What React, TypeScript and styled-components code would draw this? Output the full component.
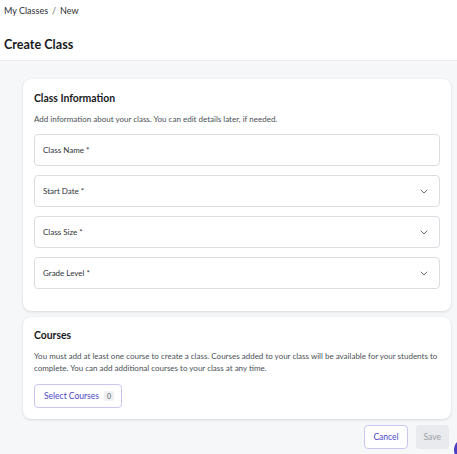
import React from 'react';
import styled, { createGlobalStyle } from 'styled-components';

const GlobalStyle = createGlobalStyle`
  html, body {
    margin: 0;
    padding: 0;
    background: #f6f7f9;
    font-family: Lato, "Open Sans", sans-serif;
    color: #1d1f22;
    overflow: hidden;
  }
`;

const fields = [
  { label: 'Class Name *', select: false },
  { label: 'Start Date *', select: true },
  { label: 'Class Size *', select: true },
  { label: 'Grade Level *', select: true },
];

const Chevron = () => (
  <svg width="8" height="5" viewBox="0 0 8 5" fill="none">
    <path d="M1 1l3 3 3-3" stroke="#6b7078" strokeWidth="1" strokeLinecap="round" strokeLinejoin="round" />
  </svg>
);

export default function App() {
  return (
    <Page>
      <GlobalStyle />
      <Header>
        <Breadcrumb>
          <Crumb>My Classes</Crumb>
          <Sep>/</Sep>
          <Crumb>New</Crumb>
        </Breadcrumb>
        <Title>Create Class</Title>
      </Header>

      <Main>
        <Card $pad="12px 11px 22px">
          <CardTitle>Class Information</CardTitle>
          <CardText>Add information about your class. You can edit details later, if needed.</CardText>
          <Fields>
            {fields.map((f) => (
              <Field key={f.label}>
                <FieldLabel>{f.label}</FieldLabel>
                {f.select && <Chevron />}
              </Field>
            ))}
          </Fields>
        </Card>

        <Card $pad="11px 11px 11px">
          <CardTitle>Courses</CardTitle>
          <CardText>
            You must add at least one course to create a class. Courses added to your class will be available for your students to complete. You can add additional courses to your class at any time.
          </CardText>
          <SelectButton>
            Select Courses
            <Count>0</Count>
          </SelectButton>
        </Card>

        <Actions>
          <OutlineButton>Cancel</OutlineButton>
          <SaveButton disabled>Save</SaveButton>
        </Actions>
      </Main>

      <HelpBubble />
    </Page>
  );
}

const Page = styled.div`
  width: 457px;
  height: 454px;
  background: #f6f7f9;
`;

const Header = styled.header`
  height: 61px;
  box-sizing: border-box;
  background: #fff;
  border-bottom: 1px solid #e9ebee;
  padding: 5px 4px 0;
`;

const Breadcrumb = styled.nav`
  display: flex;
  align-items: center;
  gap: 4px;
  font-size: 9px;
  line-height: 12px;
  color: #2a2d31;
`;

const Crumb = styled.span``;

const Sep = styled.span`
  color: #6b7078;
`;

const Title = styled.h1`
  margin: 19px 0 0;
  font-size: 12.6px;
  line-height: 18px;
  font-weight: 700;
  color: #17191c;
`;

const Main = styled.main`
  padding: 18px 6px 0 23px;
  display: flex;
  flex-direction: column;
  gap: 6px;
`;

const Card = styled.section<{ $pad: string }>`
  background: #fff;
  border-radius: 8px;
  box-shadow: 0 1px 3px rgba(20, 25, 35, 0.12), 0 0 1px rgba(20, 25, 35, 0.08);
  padding: ${(p) => p.$pad};
`;

const CardTitle = styled.h2`
  margin: 0;
  font-size: 10.4px;
  line-height: 14px;
  font-weight: 700;
  color: #17191c;
`;

const CardText = styled.p`
  margin: 8px 0 9px;
  font-size: 8px;
  line-height: 12px;
  color: #4a4f56;
`;

const Fields = styled.div`
  display: flex;
  flex-direction: column;
  gap: 9px;
`;

const Field = styled.div`
  height: 32px;
  box-sizing: border-box;
  border: 1px solid #dadde1;
  border-radius: 4px;
  display: flex;
  align-items: center;
  justify-content: space-between;
  padding: 0 11px 0 8px;
`;

const FieldLabel = styled.span`
  font-size: 8px;
  color: #2f3338;
`;

const OutlineButton = styled.button`
  display: inline-flex;
  align-items: center;
  gap: 5px;
  height: 24px;
  padding: 0 8px;
  background: #fff;
  border: 1px solid #c8c6f2;
  border-radius: 4px;
  font-family: inherit;
  font-size: 8.5px;
  color: #4b46c8;
`;

const SelectButton = styled(OutlineButton)`
  padding: 0 7px 0 9px;
`;

const Count = styled.span`
  background: #eef0f2;
  color: #555a60;
  font-size: 7px;
  border-radius: 2px;
  padding: 1px 3px;
`;

const Actions = styled.div`
  display: flex;
  justify-content: flex-end;
  gap: 8px;
  padding-right: 2px;
`;

const SaveButton = styled.button`
  height: 24px;
  padding: 0 8px;
  background: #e8eaed;
  border: none;
  border-radius: 4px;
  font-family: inherit;
  font-size: 8.5px;
  color: #9a9fa6;
`;

const HelpBubble = styled.div`
  position: fixed;
  left: 454px;
  top: 438px;
  width: 24px;
  height: 24px;
  border-radius: 50%;
  background: #4a3fc2;
`;
